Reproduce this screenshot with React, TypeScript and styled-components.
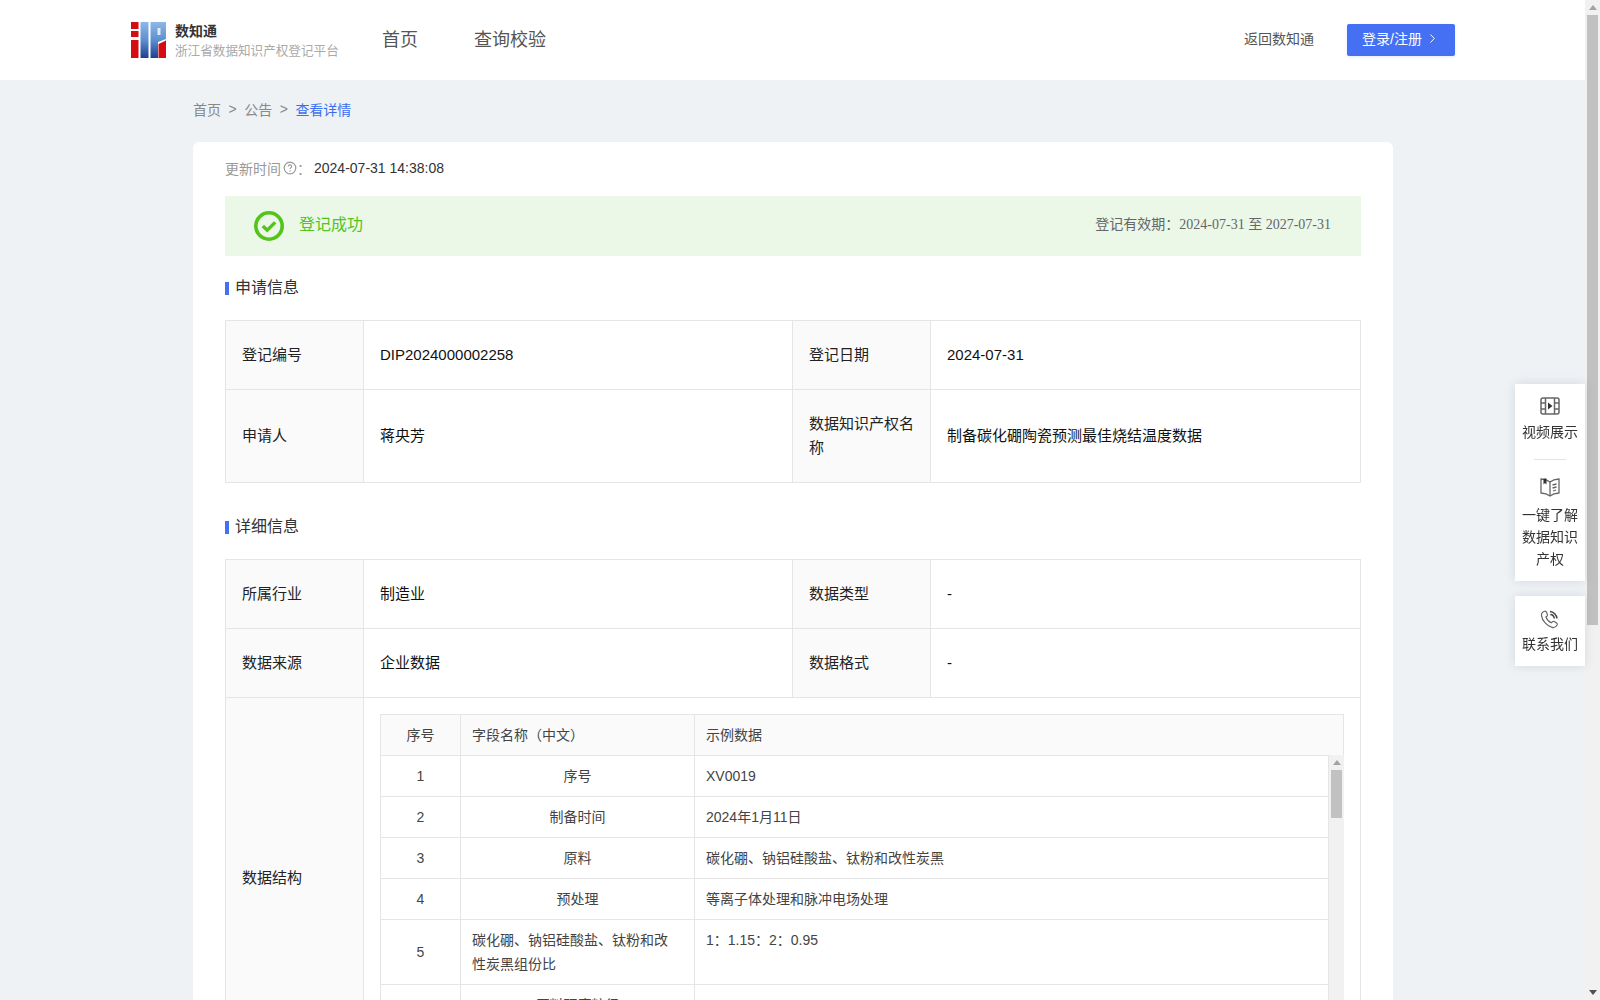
import styled, { createGlobalStyle } from 'styled-components';
import { ChevronRight } from 'lucide-react';

const sans = `"Liberation Sans", "Noto Sans CJK SC", sans-serif`;

const GlobalStyle = createGlobalStyle`
  html, body {
    margin: 0;
    padding: 0;
    height: 100%;
    overflow: hidden;
    background: #eef2f5;
    font-family: ${sans};
    color: #333;
  }
  * {
    box-sizing: border-box;
  }
`;

const Shell = styled.div`
  display: flex;
  height: 100vh;
`;

const Page = styled.div`
  flex: 1;
  min-width: 0;
  overflow: hidden;
  background: #eef2f5;
`;

const Track = styled.div`
  width: 15px;
  flex: none;
  display: flex;
  flex-direction: column;
  align-items: center;
  background: #f1f1f1;
`;

const ArrowBox = styled.div`
  height: 15px;
  flex: none;
  display: flex;
  align-items: center;
  justify-content: center;
`;

const Arrow = styled.div<{ $down?: boolean }>`
  width: 0;
  height: 0;
  border-left: 4.5px solid transparent;
  border-right: 4.5px solid transparent;
  ${({ $down }) => ($down ? 'border-top: 5px solid #505050;' : 'border-bottom: 5px solid #a3a3a3;')}
`;

const Thumb = styled.div<{ $height: number }>`
  width: 11px;
  height: ${({ $height }) => $height}px;
  flex: none;
  background: #c1c1c1;
`;

const TrackFill = styled.div`
  flex: 1;
`;

const Header = styled.header`
  height: 80px;
  background: #fff;
  display: flex;
  align-items: center;
  padding: 0 130px 0 131px;
`;

const Brand = styled.div`
  display: flex;
  align-items: center;
  gap: 9px;
  width: 251px;
`;

const BrandText = styled.div`
  display: flex;
  flex-direction: column;
  gap: 2px;
`;

const BrandName = styled.div`
  font-size: 14px;
  line-height: 20px;
  font-weight: 700;
  color: #333;
`;

const BrandSub = styled.div`
  font-size: 12.6px;
  line-height: 17px;
  color: #aaa;
  white-space: nowrap;
`;

const Nav = styled.nav`
  display: flex;
  gap: 56px;
  flex: 1;
  padding-bottom: 4px;
`;

const NavLink = styled.a`
  font-size: 18px;
  color: #555;
`;

const BackLink = styled.a`
  font-size: 14px;
  color: #555;
  margin-right: 33px;
  padding-bottom: 4px;
`;

const LoginButton = styled.button`
  width: 108px;
  height: 32px;
  border: none;
  border-radius: 2px;
  background: #4570f3;
  color: #fff;
  font-family: ${sans};
  font-size: 14px;
  display: flex;
  align-items: center;
  justify-content: center;
  gap: 3px;
  padding: 0 0 4px;
  box-shadow: 0 1px 3px rgba(69, 112, 243, 0.15);
`;

const Container = styled.main`
  width: 1200px;
  margin-left: 193px;
`;

const Breadcrumb = styled.div`
  height: 62px;
  display: flex;
  align-items: center;
  gap: 7.5px;
  padding-bottom: 4px;
  font-size: 14px;
  color: #888;
`;

const CrumbCurrent = styled.span`
  color: #3a6ff0;
`;

const Card = styled.section`
  background: #fff;
  border-radius: 6px;
  padding: 16px 32px 40px;
`;

const UpdateRow = styled.div`
  height: 22px;
  display: flex;
  align-items: center;
  padding-bottom: 2px;
  font-size: 14px;
  color: #999;
  margin-bottom: 16px;
`;

const UpdateValue = styled.span`
  color: #333;
  margin-left: 3px;
`;

const HelpIcon = styled.svg`
  width: 14px;
  height: 14px;
  margin-left: 2px;
`;

const Banner = styled.div`
  height: 60px;
  background: #ebf7e7;
  display: flex;
  align-items: center;
  padding: 0 30px 0 29px;
`;

const BannerTitle = styled.span`
  font-size: 16px;
  color: #52c41a;
  margin-left: 15px;
  padding-bottom: 7px;
  flex: 1;
`;

const Validity = styled.span`
  font-size: 14px;
  color: #666;
  padding-bottom: 7px;
`;

const ValidityDate = styled.span`
  font-family: "Liberation Serif", "Noto Sans CJK SC", serif;
`;

const SectionTitle = styled.h3<{ $top: number }>`
  margin: ${({ $top }) => $top}px 0 0;
  height: 44px;
  padding-top: 1px;
  display: flex;
  align-items: flex-start;
  gap: 6px;
  font-size: 16px;
  font-weight: 400;
  line-height: 22px;
  color: #333;

  &::before {
    content: '';
    width: 4px;
    height: 13px;
    margin-top: 5px;
    background: #4570f3;
  }
`;

const InfoTable = styled.table`
  width: 1136px;
  table-layout: fixed;
  border-collapse: collapse;
  font-size: 15px;
  line-height: 24px;
  color: #111;
`;

const Row = styled.tr<{ $height: number }>`
  height: ${({ $height }) => $height}px;
`;

const Label = styled.td`
  border: 1px solid #e5e5e5;
  background: #fafafa;
  padding: 0 16px;
  color: #222;
`;

const Value = styled.td`
  border: 1px solid #e5e5e5;
  padding: 0 16px;
`;

const StructureCell = styled.td`
  border: 1px solid #e5e5e5;
  padding: 16px;
`;

const FieldTable = styled.table`
  width: 100%;
  table-layout: fixed;
  border-collapse: collapse;
  font-size: 14px;
  line-height: 24px;
  color: #444;
`;

const HeadCell = styled.th<{ $center?: boolean }>`
  height: 41px;
  font-weight: 400;
  background: #fafafa;
  border: 1px solid #e5e5e5;
  padding: 0 11px;
  text-align: ${({ $center }) => ($center ? 'center' : 'left')};
`;

const FieldBody = styled.div`
  height: 287px;
  display: flex;
  overflow: hidden;
  margin-top: -1px;
`;

const FieldRows = styled.div`
  flex: 1;
  min-width: 0;
`;

const BodyCell = styled.td<{ $align?: string; $top?: boolean; $narrow?: boolean }>`
  border: 1px solid #e5e5e5;
  padding: 8px ${({ $narrow }) => ($narrow ? 16 : 11)}px 8px 11px;
  text-align: ${({ $align }) => $align || 'left'};
  vertical-align: ${({ $top }) => ($top ? 'top' : 'middle')};
`;

const SideDock = styled.aside`
  position: fixed;
  top: 384px;
  right: 15px;
  width: 70px;
  display: flex;
  flex-direction: column;
  gap: 15px;
`;

const DockPanel = styled.div`
  background: #fff;
  box-shadow: 0 0 10px rgba(60, 70, 90, 0.14);
  padding: 13px 0 11px;
`;

const DockItem = styled.div`
  display: flex;
  flex-direction: column;
  align-items: center;
  text-align: center;
  font-size: 14px;
  line-height: 22px;
  color: #333;
`;

const DockLabel = styled.div<{ $gap: number }>`
  margin-top: ${({ $gap }) => $gap}px;
`;

const DockDivider = styled.div`
  width: 32px;
  height: 1px;
  background: #e3e3e3;
  margin: 16px auto 17px;
`;

const Logo = () => (
  <svg width="35" height="36" viewBox="0 0 35 36">
    <defs>
      <linearGradient id="logoBlue" x1="0" y1="0" x2="0" y2="1">
        <stop offset="0" stopColor="#8db8e6" />
        <stop offset="0.5" stopColor="#5d8fd0" />
        <stop offset="1" stopColor="#1f3f8e" />
      </linearGradient>
    </defs>
    <rect x="0" y="0" width="7.500" height="7" fill="#d40d12" />
    <rect x="0" y="9" width="7.500" height="6" fill="#d40d12" />
    <rect x="0" y="18" width="7.500" height="18" fill="#d40d12" />
    <rect x="9.500" y="0" width="8" height="36" fill="url(#logoBlue)" />
    <path d="M19.500 0H35v17l-8 3v16h-7.500z" fill="url(#logoBlue)" />
    <rect x="26.500" y="6" width="3" height="7" fill="#dfeaf7" />
    <path d="M27.500 22l7.500-3.500V36h-7.500z" fill="#d40d12" />
  </svg>
);

const CheckCircle = () => (
  <svg width="30" height="30" viewBox="0 0 30 30" fill="none">
    <circle cx="15" cy="15" r="13.200" stroke="#52c41a" strokeWidth="3.600" />
    <path d="M8.800 15l4.400 4.200 8-7.800" stroke="#52c41a" strokeWidth="3.400" />
  </svg>
);

const FilmIcon = () => (
  <svg width="20" height="18" viewBox="0 0 20 18" fill="none" stroke="#666" strokeWidth="1.500">
    <rect x="1" y="1" width="18" height="16" rx="2" />
    <path d="M5.500 1v16M14.500 1v16M1 6h4.500M1 12h4.500M14.500 6H19M14.500 12H19" />
    <path d="M8 5.500l4.500 3.500L8 12.500z" fill="#333" stroke="none" />
  </svg>
);

const BookIcon = () => (
  <svg width="20" height="20" viewBox="0 0 20 20" fill="none" stroke="#666" strokeWidth="1.300">
    <path d="M1 2c3.500.2 6.500 1 9 3 2.500-2 5.500-2.800 9-3v14c-3.500.2-6.500 1-9 3-2.500-2-5.500-2.800-9-3z" />
    <path d="M10 5v14" />
    <path d="M3.500 1.500h3v6l-1.500-1.500-1.500 1.500z" fill="#333" stroke="none" />
    <path d="M12.500 8l4-1M12.500 11l4-1M13 14l3-1" />
  </svg>
);

const PhoneIcon = () => (
  <svg width="20" height="20" viewBox="0 0 20 20" fill="none" stroke="#666" strokeWidth="1.200">
    <path d="M4.500 2.200c-1.800.6-3.300 2.200-3 4.400.6 5 5.600 10.600 10.600 11.800 2 .5 4-.6 5-2.400.4-.8.2-1.500-.5-2l-2.300-1.500c-.7-.4-1.400-.3-2 .3l-.9 1c-2.500-1-4.500-3.200-5.500-5.800l1-.8c.6-.6.8-1.300.4-2L6.300 2.800c-.5-.7-1.100-.9-1.800-.6z" />
    <path d="M10 2.500c3.500.2 6.700 3.300 7 7M10.300 5.500c2 .1 3.800 1.900 4 4" strokeWidth="1.500" stroke="#444" />
  </svg>
);

const Scrollbar = ({ thumb }: { thumb: number }) => (
  <Track>
    <ArrowBox>
      <Arrow />
    </ArrowBox>
    <Thumb $height={thumb} />
    <TrackFill />
    <ArrowBox>
      <Arrow $down />
    </ArrowBox>
  </Track>
);

const fieldRows = [
  { no: '1', name: '序号', sample: 'XV0019' },
  { no: '2', name: '制备时间', sample: '2024年1月11日' },
  { no: '3', name: '原料', sample: '碳化硼、钠铝硅酸盐、钛粉和改性炭黑' },
  { no: '4', name: '预处理', sample: '等离子体处理和脉冲电场处理' },
  { no: '5', name: '碳化硼、钠铝硅酸盐、钛粉和改性炭黑组份比', sample: '1：1.15：2：0.95', long: true },
  { no: '6', name: '原料研磨粒径', sample: '10' },
];

const FieldColumns = () => (
  <colgroup>
    <col style={{ width: 80 }} />
    <col style={{ width: 234 }} />
    <col />
  </colgroup>
);

const InfoColumns = () => (
  <colgroup>
    <col style={{ width: 138 }} />
    <col style={{ width: 429 }} />
    <col style={{ width: 138 }} />
    <col />
  </colgroup>
);

export default function App() {
  return (
    <>
      <GlobalStyle />
      <Shell>
        <Page>
          <Header>
            <Brand>
              <Logo />
              <BrandText>
                <BrandName>数知通</BrandName>
                <BrandSub>浙江省数据知识产权登记平台</BrandSub>
              </BrandText>
            </Brand>
            <Nav>
              <NavLink>首页</NavLink>
              <NavLink>查询校验</NavLink>
            </Nav>
            <BackLink>返回数知通</BackLink>
            <LoginButton>
              登录/注册
              <ChevronRight size={15} strokeWidth={1.6} />
            </LoginButton>
          </Header>

          <Container>
            <Breadcrumb>
              <span>首页</span>
              <span>&gt;</span>
              <span>公告</span>
              <span>&gt;</span>
              <CrumbCurrent>查看详情</CrumbCurrent>
            </Breadcrumb>

            <Card>
              <UpdateRow>
                更新时间
                <HelpIcon viewBox="0 0 14 14" fill="none" stroke="#999">
                  <circle cx="7" cy="7" r="5.800" strokeWidth="1.200" />
                  <path d="M5.300 5.500c0-1 .8-1.600 1.700-1.600s1.700.6 1.700 1.500c0 1.300-1.700 1.300-1.700 2.700" strokeWidth="1.100" />
                  <circle cx="7" cy="10" r=".7" fill="#999" stroke="none" />
                </HelpIcon>
                ：<UpdateValue>2024-07-31 14:38:08</UpdateValue>
              </UpdateRow>

              <Banner>
                <CheckCircle />
                <BannerTitle>登记成功</BannerTitle>
                <Validity>
                  登记有效期：<ValidityDate>2024-07-31 至 2027-07-31</ValidityDate>
                </Validity>
              </Banner>

              <SectionTitle $top={20}>申请信息</SectionTitle>
              <InfoTable>
                <InfoColumns />
                <tbody>
                  <Row $height={69}>
                    <Label>登记编号</Label>
                    <Value>DIP2024000002258</Value>
                    <Label>登记日期</Label>
                    <Value>2024-07-31</Value>
                  </Row>
                  <Row $height={93}>
                    <Label>申请人</Label>
                    <Value>蒋央芳</Value>
                    <Label>数据知识产权名称</Label>
                    <Value>制备碳化硼陶瓷预测最佳烧结温度数据</Value>
                  </Row>
                </tbody>
              </InfoTable>

              <SectionTitle $top={32}>详细信息</SectionTitle>
              <InfoTable>
                <InfoColumns />
                <tbody>
                  <Row $height={69}>
                    <Label>所属行业</Label>
                    <Value>制造业</Value>
                    <Label>数据类型</Label>
                    <Value>-</Value>
                  </Row>
                  <Row $height={69}>
                    <Label>数据来源</Label>
                    <Value>企业数据</Value>
                    <Label>数据格式</Label>
                    <Value>-</Value>
                  </Row>
                  <tr>
                    <Label>数据结构</Label>
                    <StructureCell colSpan={3}>
                      <FieldTable>
                        <FieldColumns />
                        <thead>
                          <tr>
                            <HeadCell $center>序号</HeadCell>
                            <HeadCell>字段名称（中文）</HeadCell>
                            <HeadCell>示例数据</HeadCell>
                          </tr>
                        </thead>
                      </FieldTable>
                      <FieldBody>
                        <FieldRows>
                          <FieldTable>
                            <FieldColumns />
                            <tbody>
                              {fieldRows.map((row) => (
                                <tr key={row.no}>
                                  <BodyCell $align="center">{row.no}</BodyCell>
                                  <BodyCell $align={row.long ? 'left' : 'center'} $narrow={row.long}>
                                    {row.name}
                                  </BodyCell>
                                  <BodyCell $top>{row.sample}</BodyCell>
                                </tr>
                              ))}
                            </tbody>
                          </FieldTable>
                        </FieldRows>
                        <Scrollbar thumb={48} />
                      </FieldBody>
                    </StructureCell>
                  </tr>
                </tbody>
              </InfoTable>
            </Card>
          </Container>

          <SideDock>
            <DockPanel>
              <DockItem>
                <FilmIcon />
                <DockLabel $gap={6}>视频展示</DockLabel>
              </DockItem>
              <DockDivider />
              <DockItem>
                <BookIcon />
                <DockLabel $gap={7}>
                  一键了解
                  <br />
                  数据知识
                  <br />
                  产权
                </DockLabel>
              </DockItem>
            </DockPanel>
            <DockPanel>
              <DockItem>
                <PhoneIcon />
                <DockLabel $gap={4}>联系我们</DockLabel>
              </DockItem>
            </DockPanel>
          </SideDock>
        </Page>
        <Scrollbar thumb={610} />
      </Shell>
    </>
  );
}
